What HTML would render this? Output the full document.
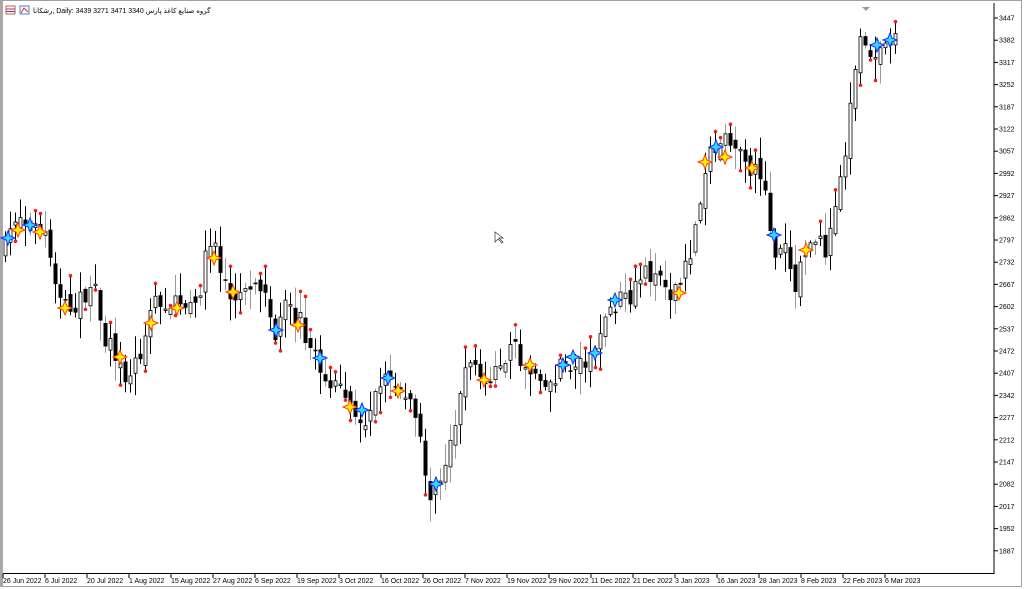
<!DOCTYPE html>
<html><head><meta charset="utf-8"><style>
html,body{margin:0;padding:0;background:#fff;}
body{width:1024px;height:589px;overflow:hidden;position:relative;font-family:"Liberation Sans","Noto Sans CJK SC",sans-serif;}
#frame{position:absolute;left:0;top:0;width:1022px;height:587px;border:1px solid #a0a0a0;border-left:3px solid #a8a8a8;box-sizing:border-box;}
</style></head><body>
<div id="frame"></div>
<svg id="c" width="1024" height="589" style="position:absolute;left:0;top:0" xmlns="http://www.w3.org/2000/svg">
<g font-family="Liberation Sans, DejaVu Sans, sans-serif" font-size="7" fill="#000">
<rect x="6" y="6" width="9" height="8" fill="#fff" stroke="#c03030" stroke-width="0.8"/>
<line x1="6" y1="9" x2="15" y2="9" stroke="#c03030"/><line x1="6" y1="11.5" x2="15" y2="11.5" stroke="#3050c0"/>
<rect x="20" y="6" width="9" height="8" fill="#fff" stroke="#2060d0" stroke-width="0.8"/>
<path d="M21 13 L24 8 L28 12" stroke="#d03030" fill="none"/>
<text x="33" y="13">رشکانا, Daily:  3439 3271 3471 3340   گروه صنایع کاغذ پارس</text>
</g>
<line x1="994" y1="3" x2="994" y2="574" stroke="#000" stroke-width="1"/>
<line x1="3" y1="573.5" x2="994" y2="573.5" stroke="#000" stroke-width="1"/>
<g id="g"></g>
</svg>
<script>
(function(){
var s=document.getElementById('g'),h='';
var prices=[3447,3382,3317,3252,3187,3122,3057,2992,2927,2862,2797,2732,2667,2602,2537,2472,2407,2342,2277,2212,2147,2082,2017,1952,1887];
prices.forEach(function(p,i){var y=18+22.2*i;h+='<line x1="994" y1="'+y+'" x2="998" y2="'+y+'" stroke="#000"/><text x="999" y="'+(y+2.5)+'" font-size="7" font-family="Liberation Sans,sans-serif">'+p+'</text>';});
var d=['26 Jun 2022','6 Jul 2022','20 Jul 2022','1 Aug 2022','15 Aug 2022','27 Aug 2022','6 Sep 2022','19 Sep 2022','3 Oct 2022','16 Oct 2022','26 Oct 2022','7 Nov 2022','19 Nov 2022','29 Nov 2022','11 Dec 2022','21 Dec 2022','3 Jan 2023','16 Jan 2023','28 Jan 2023','8 Feb 2023','22 Feb 2023','6 Mar 2023'];
d.forEach(function(t,i){var x=3+42*i;h+='<line x1="'+x+'" y1="574" x2="'+x+'" y2="578" stroke="#000"/><text x="'+x+'" y="583" font-size="7" font-family="Liberation Sans,sans-serif">'+t+'</text>';});
var k=[[5,250],[15,215],[30,225],[45,235],[55,290],[65,305],[80,300],[95,290],[105,345],[120,355],[128,385],[140,350],[150,310],[165,300],[180,310],[195,310],[205,260],[212,230],[220,270],[232,295],[245,290],[255,275],[265,290],[275,335],[285,310],[300,320],[315,360],[330,385],[345,400],[355,410],[365,420],[375,385],[385,375],[395,385],[405,395],[415,420],[425,470],[432,505],[440,480],[448,450],[458,400],[468,360],[478,380],[490,380],[500,370],[510,345],[520,360],[530,370],[540,370],[550,390],[560,370],[575,365],[590,355],[600,330],[610,310],[620,300],[630,300],[640,275],[655,270],[670,290],[680,285],[690,255],[700,200],[705,165],[715,150],[725,130],[735,145],[745,165],[755,170],[765,200],[775,250],[785,240],[795,290],[805,250],[815,240],[825,250],[835,210],[845,150],[852,90],[858,40],[865,55],[875,50],[885,45],[895,30]];
function f(x){for(var i=1;i<k.length;i++){if(x<=k[i][0]){var a=k[i-1],b=k[i];return a[1]+(b[1]-a[1])*(x-a[0])/(b[0]-a[0]);}}return 30;}
var seed=7;function r(){seed=(seed*16807)%2147483647;return seed/2147483647;}
var prev=f(5);
for(var x=5;x<=895;x+=5){
 var c=f(x)+(r()-0.5)*22,o=prev+(r()-0.5)*14;
 var bt=Math.min(o,c),bb=Math.max(o,c);if(bb-bt<1.5)bb=bt+1.5;
 var hi=bt-r()*20-2,lo=bb+r()*20+2;
 h+='<line x1="'+(x+0.5)+'" y1="'+hi+'" x2="'+(x+0.5)+'" y2="'+lo+'" stroke="'+(r()<0.3?'#999':'#000')+'"/>';
 if(c<o)h+='<rect x="'+(x-1)+'" y="'+bt+'" width="3" height="'+(bb-bt)+'" fill="#fff" stroke="#000" stroke-width="0.8"/>';
 else h+='<rect x="'+(x-1.5)+'" y="'+bt+'" width="4" height="'+(bb-bt)+'" fill="#000"/>';
 if(r()<0.3)h+='<circle cx="'+(x+0.5)+'" cy="'+(r()<0.5?hi:lo)+'" r="1.8" fill="#f02020"/>';
 prev=c;}
function star(x,y,fill,str){return '<path d="M'+x+' '+(y-7)+' L'+(x+2)+' '+(y-2)+' L'+(x+7)+' '+y+' L'+(x+2)+' '+(y+2)+' L'+x+' '+(y+7)+' L'+(x-2)+' '+(y+2)+' L'+(x-7)+' '+y+' L'+(x-2)+' '+(y-2)+'Z" fill="'+fill+'" stroke="'+str+'" stroke-width="1"/>';}
[[8,238],[30,225],[276,330],[320,358],[362,410],[388,378],[436,484],[563,365],[573,357],[595,353],[615,300],[716,147],[774,235],[877,45],[890,40]].forEach(function(p){h+=star(p[0],p[1],'#30d8ff','#1030ff');});
[[18,230],[40,232],[65,308],[120,357],[151,323],[177,308],[214,258],[233,292],[298,325],[350,407],[398,391],[484,380],[530,365],[679,293],[705,162],[725,157],[752,168],[806,250]].forEach(function(p){h+=star(p[0],p[1],'#ffee00','#ff4000');});
h+='<path d="M862 7 L870 7 L866 11Z" fill="#999"/>';
h+='<path d="M495 232 L495 242 L498 239 L502 243 L503 242 L499 238 L503 238Z" fill="#fff" stroke="#333" stroke-width="0.7"/>';
s.innerHTML=h;
})();
</script>
</body></html>
